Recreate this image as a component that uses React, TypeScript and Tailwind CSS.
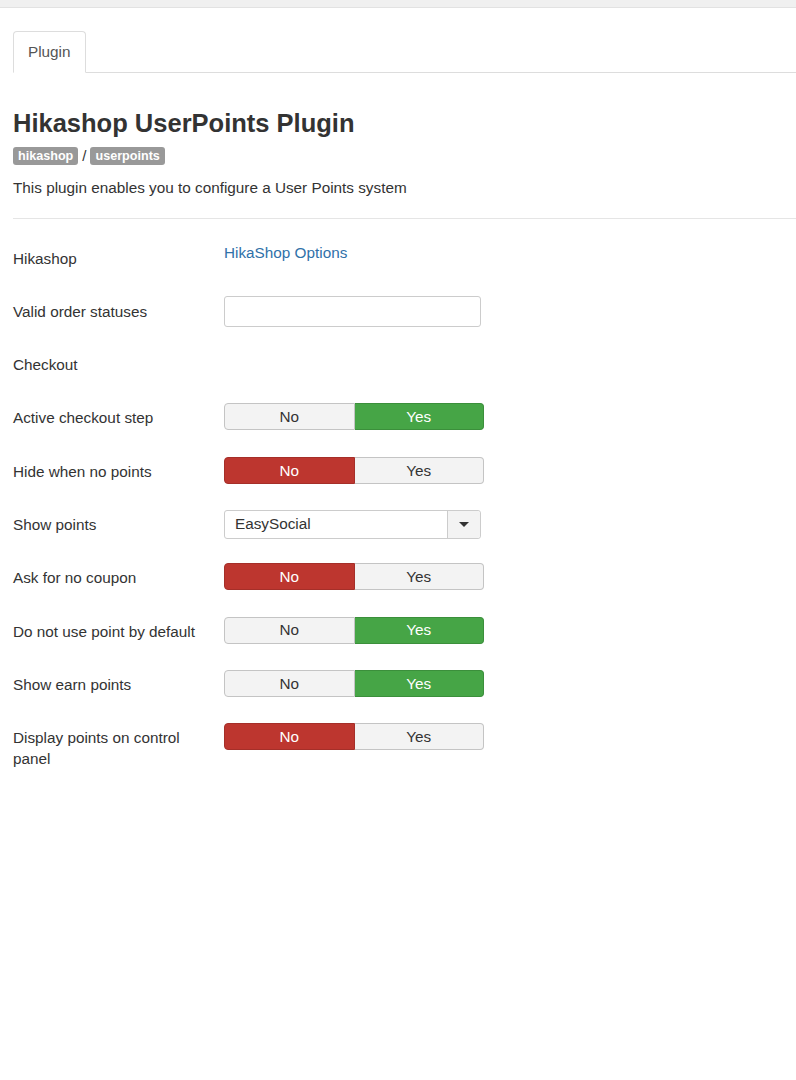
import React from 'react';

type Row =
  | { label: string; kind: 'link'; text: string }
  | { label: string; kind: 'input' }
  | { label: string; kind: 'none' }
  | { label: string; kind: 'toggle'; value: 'yes' | 'no' }
  | { label: string; kind: 'select'; value: string };

const rows: Row[] = [
  { label: 'Hikashop', kind: 'link', text: 'HikaShop Options' },
  { label: 'Valid order statuses', kind: 'input' },
  { label: 'Checkout', kind: 'none' },
  { label: 'Active checkout step', kind: 'toggle', value: 'yes' },
  { label: 'Hide when no points', kind: 'toggle', value: 'no' },
  { label: 'Show points', kind: 'select', value: 'EasySocial' },
  { label: 'Ask for no coupon', kind: 'toggle', value: 'no' },
  { label: 'Do not use point by default', kind: 'toggle', value: 'yes' },
  { label: 'Show earn points', kind: 'toggle', value: 'yes' },
  { label: 'Display points on control panel', kind: 'toggle', value: 'no' },
];

function Toggle({ value }: { value: 'yes' | 'no' }) {
  const yes = value === 'yes';
  return (
    <div className="flex w-[260px] h-[27px] text-[15.3px] leading-none">
      <div
        className={
          'flex-1 flex items-center justify-center rounded-l-[4px] border ' +
          (yes
            ? 'bg-[#f3f3f3] border-[#c4c4c4] text-[#333]'
            : 'bg-[#bd362f] border-[#a52f29] text-white')
        }
      >
        No
      </div>
      <div
        className={
          'flex-1 flex items-center justify-center rounded-r-[4px] border border-l-0 ' +
          (yes
            ? 'bg-[#46a546] border-[#3b8f3b] text-white'
            : 'bg-[#f3f3f3] border-[#c4c4c4] text-[#333]')
        }
      >
        Yes
      </div>
    </div>
  );
}

function Control({ row }: { row: Row }) {
  switch (row.kind) {
    case 'link':
      return <a className="block text-[15.3px] leading-[20px] text-[#3071a9] -mt-[1px]">{row.text}</a>;
    case 'input':
      return <div className="w-[257px] h-[31px] -mt-[1px] border border-[#cccccc] rounded-[3px] bg-white" />;
    case 'select':
      return (
        <div className="flex w-[257px] h-[29px] border border-[#cccccc] rounded-[3px] bg-white">
          <div className="flex-1 flex items-center pl-[10px] text-[15.3px] text-[#333]">{row.value}</div>
          <div className="w-[33px] flex items-center justify-center bg-[#f3f3f3] border-l border-[#cccccc] rounded-r-[3px]">
            <div className="w-0 h-0 border-l-[5px] border-r-[5px] border-t-[5px] border-l-transparent border-r-transparent border-t-[#333]" />
          </div>
        </div>
      );
    case 'toggle':
      return <Toggle value={row.value} />;
    default:
      return null;
  }
}

export default function App() {
  return (
    <div className="min-h-[1080px] bg-white text-[#333] font-['Liberation_Sans',Helvetica,Arial,sans-serif]">
      {/* barra superior */}
      <div className="h-[8px] bg-[#f0f0f0] border-b border-[#e2e2e2]" />

      <div className="pl-[13px]">
        {/* pestañas */}
        <div className="mt-[23px] flex border-b border-[#dddddd]">
          <div className="-mb-px px-[14px] h-[42px] flex items-center bg-white border border-[#dddddd] border-b-white rounded-t-[4px] text-[15.3px] text-[#555]">
            Plugin
          </div>
        </div>

        <h1 className="mt-[36px] text-[25.5px] font-bold leading-[28px] text-[#333]">Hikashop UserPoints Plugin</h1>

        <div className="mt-[8px] flex items-center gap-[4px] text-[12.6px]">
          <span className="bg-[#999999] text-white font-bold rounded-[3px] px-[5px] h-[18px] flex items-center">hikashop</span>
          <span className="text-[#333] text-[15px]">/</span>
          <span className="bg-[#999999] text-white font-bold rounded-[3px] px-[5px] h-[18px] flex items-center">userpoints</span>
        </div>

        <p className="mt-[10px] text-[15.3px] leading-[20px]">This plugin enables you to configure a User Points system</p>

        <div className="mt-[20px] border-t border-[#e5e5e5]" />

        <div className="mt-[24px]">
          {rows.map((row) => (
            <div key={row.label} className="flex h-[53.3px]">
              <div className="w-[198px] pt-[5px] text-[15.3px] leading-[21px] text-[#333]">{row.label}</div>
              <div className="ml-[13px] pt-[1px]">
                <Control row={row} />
              </div>
            </div>
          ))}
        </div>
      </div>
    </div>
  );
}
